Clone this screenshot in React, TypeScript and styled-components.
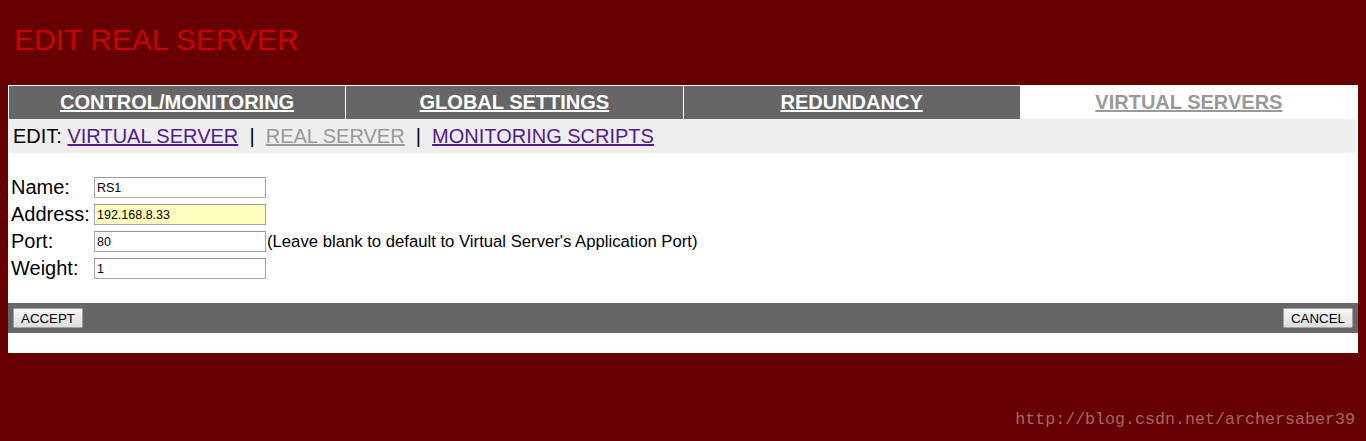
import React from "react";
import styled, { createGlobalStyle } from "styled-components";

const Global = createGlobalStyle`
  html, body {
    margin: 0;
    padding: 0;
    background: #660000;
  }
  body {
    padding: 8px;
    font-family: "Liberation Sans", Arial, sans-serif;
    color: #000;
  }
`;

const Title = styled.h1`
  margin: 0;
  height: 77px;
  padding: 14px 0 0 6px;
  box-sizing: border-box;
  font-family: "Liberation Sans", Arial, sans-serif;
  font-weight: normal;
  font-size: 30px;
  line-height: 36px;
  color: #cc0000;
`;

const Panel = styled.div`
  background: #ffffff;
`;

const Tabs = styled.div`
  display: grid;
  grid-template-columns: repeat(4, 1fr);
  gap: 1px;
  padding: 1px 1px 0 1px;
  background: #ffffff;
`;

const Tab = styled.div<{ $active?: boolean }>`
  height: 33px;
  display: flex;
  align-items: center;
  justify-content: center;
  background: ${(p) => (p.$active ? "#ffffff" : "#666666")};
`;

const TabLink = styled.a<{ $active?: boolean }>`
  font-size: 20px;
  font-weight: bold;
  color: ${(p) => (p.$active ? "#999999" : "#ffffff")};
  text-decoration: underline;
  cursor: pointer;
`;

const SubNav = styled.div`
  margin: 0 2px 0 1px;
  height: 34px;
  display: flex;
  align-items: center;
  padding-left: 4px;
  background: #eeeeee;
  font-size: 20px;
  white-space: pre;
`;

const SubLink = styled.a<{ $current?: boolean }>`
  color: ${(p) => (p.$current ? "#999999" : "#551a8b")};
  text-decoration: underline;
  cursor: pointer;
`;

const Sep = styled.span`
  color: #000;
`;

const Form = styled.div`
  display: grid;
  grid-template-columns: 83px 172px max-content;
  grid-auto-rows: 21px;
  row-gap: 6px;
  align-items: center;
  padding: 24px 0 24px 3px;
`;

const Label = styled.label`
  font-size: 20px;
  line-height: 21px;
  white-space: nowrap;
`;

const Field = styled.input<{ $highlight?: boolean }>`
  box-sizing: border-box;
  width: 172px;
  height: 21px;
  margin: 0;
  padding: 0 2px;
  border: 1px solid #a9a9a9;
  border-top-color: #9a9a9a;
  background: ${(p) => (p.$highlight ? "#ffffc0" : "#ffffff")};
  font-family: "Liberation Sans", Arial, sans-serif;
  font-size: 12.5px;
  color: #000;
  outline: none;
`;

const Hint = styled.span`
  font-size: 16.7px;
  padding-left: 1px;
  white-space: nowrap;
`;

const Footer = styled.div`
  height: 30px;
  background: #666666;
  display: flex;
  align-items: center;
  justify-content: space-between;
  padding: 0 5px;
`;

const Button = styled.button`
  height: 20px;
  width: 70px;
  padding: 0;
  border: 1px solid #a0a0a0;
  border-radius: 1px;
  background: linear-gradient(#f6f6f6, #dedede);
  font-family: "Liberation Sans", Arial, sans-serif;
  font-size: 13.3px;
  color: #000;
  cursor: pointer;
`;

const BottomSpace = styled.div`
  height: 20px;
  background: #ffffff;
`;

const Watermark = styled.div`
  margin-top: 57px;
  padding-right: 3px;
  text-align: right;
  font-family: "Liberation Mono", "Courier New", monospace;
  font-size: 16.67px;
  line-height: 20px;
  color: #a86464;
`;

const tabs = [
  { label: "CONTROL/MONITORING" },
  { label: "GLOBAL SETTINGS" },
  { label: "REDUNDANCY" },
  { label: "VIRTUAL SERVERS", active: true },
];

const fields = [
  { label: "Name:", value: "RS1" },
  { label: "Address:", value: "192.168.8.33", highlight: true },
  {
    label: "Port:",
    value: "80",
    hint: "(Leave blank to default to Virtual Server's Application Port)",
  },
  { label: "Weight:", value: "1" },
];

export default function App() {
  return (
    <>
      <Global />
      <Title>EDIT REAL SERVER</Title>
      <Panel>
        <Tabs>
          {tabs.map((t) => (
            <Tab key={t.label} $active={t.active}>
              <TabLink $active={t.active}>{t.label}</TabLink>
            </Tab>
          ))}
        </Tabs>
        <SubNav>
          EDIT: <SubLink>VIRTUAL SERVER</SubLink>
          <Sep>  |  </Sep>
          <SubLink $current>REAL SERVER</SubLink>
          <Sep>  |  </Sep>
          <SubLink>MONITORING SCRIPTS</SubLink>
        </SubNav>
        <Form>
          {fields.map((f) => (
            <React.Fragment key={f.label}>
              <Label>{f.label}</Label>
              <Field defaultValue={f.value} $highlight={f.highlight} />
              {f.hint ? <Hint>{f.hint}</Hint> : <span />}
            </React.Fragment>
          ))}
        </Form>
        <Footer>
          <Button>ACCEPT</Button>
          <Button>CANCEL</Button>
        </Footer>
        <BottomSpace />
      </Panel>
      <Watermark>http://blog.csdn.net/archersaber39</Watermark>
    </>
  );
}
